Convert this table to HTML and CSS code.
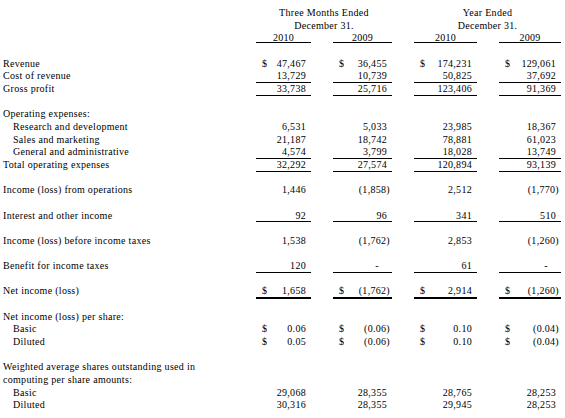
FILE: index.html
```html
<!DOCTYPE html>
<html>
<head>
<meta charset="utf-8">
<link rel="stylesheet" href="styles.css">
</head>
<body>
<div class="sheet">
  <div class="row"><div class="lbl"></div><div class="hd span2">Three Months Ended</div><div class="hd span2">Year Ended</div></div>
  <div class="row"><div class="lbl"></div><div class="hd span2">December 31.</div><div class="hd span2">December 31.</div></div>
  <div class="row"><div class="lbl"></div><div class="hd yr">2010</div><div class="hd yr">2009</div><div class="hd yr">2010</div><div class="hd yr">2009</div></div>
  <div class="row"></div>

  <div class="row"><div class="lbl">Revenue</div>
    <div class="v"><span class="cur">$</span><span>47,467</span></div>
    <div class="v"><span class="cur">$</span><span>36,455</span></div>
    <div class="v"><span class="cur">$</span><span>174,231</span></div>
    <div class="v"><span class="cur">$</span><span>129,061</span></div></div>
  <div class="row"><div class="lbl">Cost of revenue</div>
    <div class="v ul"><span>13,729</span></div>
    <div class="v ul"><span>10,739</span></div>
    <div class="v ul"><span>50,825</span></div>
    <div class="v ul"><span>37,692</span></div></div>
  <div class="row"><div class="lbl">Gross profit</div>
    <div class="v ul"><span>33,738</span></div>
    <div class="v ul"><span>25,716</span></div>
    <div class="v ul"><span>123,406</span></div>
    <div class="v ul"><span>91,369</span></div></div>
  <div class="row"></div>

  <div class="row"><div class="lbl">Operating expenses:</div></div>
  <div class="row"><div class="lbl ind">Research and development</div>
    <div class="v"><span>6,531</span></div>
    <div class="v"><span>5,033</span></div>
    <div class="v"><span>23,985</span></div>
    <div class="v"><span>18,367</span></div></div>
  <div class="row"><div class="lbl ind">Sales and marketing</div>
    <div class="v"><span>21,187</span></div>
    <div class="v"><span>18,742</span></div>
    <div class="v"><span>78,881</span></div>
    <div class="v"><span>61,023</span></div></div>
  <div class="row"><div class="lbl ind">General and administrative</div>
    <div class="v ul"><span>4,574</span></div>
    <div class="v ul"><span>3,799</span></div>
    <div class="v ul"><span>18,028</span></div>
    <div class="v ul"><span>13,749</span></div></div>
  <div class="row"><div class="lbl">Total operating expenses</div>
    <div class="v ul"><span>32,292</span></div>
    <div class="v ul"><span>27,574</span></div>
    <div class="v ul"><span>120,894</span></div>
    <div class="v ul"><span>93,139</span></div></div>
  <div class="row"></div>

  <div class="row"><div class="lbl">Income (loss) from operations</div>
    <div class="v"><span>1,446</span></div>
    <div class="v"><span class="neg">(1,858)</span></div>
    <div class="v"><span>2,512</span></div>
    <div class="v"><span class="neg">(1,770)</span></div></div>
  <div class="row"></div>

  <div class="row"><div class="lbl">Interest and other income</div>
    <div class="v ul"><span>92</span></div>
    <div class="v ul"><span>96</span></div>
    <div class="v ul"><span>341</span></div>
    <div class="v ul"><span>510</span></div></div>
  <div class="row"></div>

  <div class="row"><div class="lbl">Income (loss) before income taxes</div>
    <div class="v"><span>1,538</span></div>
    <div class="v"><span class="neg">(1,762)</span></div>
    <div class="v"><span>2,853</span></div>
    <div class="v"><span class="neg">(1,260)</span></div></div>
  <div class="row"></div>

  <div class="row"><div class="lbl">Benefit for income taxes</div>
    <div class="v ul"><span>120</span></div>
    <div class="v ul"><span class="dash">-</span></div>
    <div class="v ul"><span>61</span></div>
    <div class="v ul"><span class="dash">-</span></div></div>
  <div class="row"></div>

  <div class="row"><div class="lbl">Net income (loss)</div>
    <div class="v dul"><span class="cur">$</span><span>1,658</span></div>
    <div class="v dul"><span class="cur">$</span><span class="neg">(1,762)</span></div>
    <div class="v dul"><span class="cur">$</span><span>2,914</span></div>
    <div class="v dul"><span class="cur">$</span><span class="neg">(1,260)</span></div></div>
  <div class="row"></div>

  <div class="row"><div class="lbl">Net income (loss) per share:</div></div>
  <div class="row"><div class="lbl ind">Basic</div>
    <div class="v"><span class="cur">$</span><span>0.06</span></div>
    <div class="v"><span class="cur">$</span><span class="neg">(0.06)</span></div>
    <div class="v"><span class="cur">$</span><span>0.10</span></div>
    <div class="v"><span class="cur">$</span><span class="neg">(0.04)</span></div></div>
  <div class="row"><div class="lbl ind">Diluted</div>
    <div class="v"><span class="cur">$</span><span>0.05</span></div>
    <div class="v"><span class="cur">$</span><span class="neg">(0.06)</span></div>
    <div class="v"><span class="cur">$</span><span>0.10</span></div>
    <div class="v"><span class="cur">$</span><span class="neg">(0.04)</span></div></div>
  <div class="row"></div>

  <div class="row"><div class="lbl">Weighted average shares outstanding used in</div></div>
  <div class="row"><div class="lbl">computing per share amounts:</div></div>
  <div class="row"><div class="lbl ind">Basic</div>
    <div class="v"><span>29,068</span></div>
    <div class="v"><span>28,355</span></div>
    <div class="v"><span>28,765</span></div>
    <div class="v"><span>28,253</span></div></div>
  <div class="row"><div class="lbl ind">Diluted</div>
    <div class="v"><span>30,316</span></div>
    <div class="v"><span>28,355</span></div>
    <div class="v"><span>29,945</span></div>
    <div class="v"><span>28,253</span></div></div>
</div>
</body>
</html>
```
FILE: styles.css
```css
html, body {
  margin: 0;
  padding: 0;
  background: #fff;
}
body {
  font-family: "Liberation Serif", "Times New Roman", serif;
  font-size: 10px;
  letter-spacing: 0.3px;
  color: #000;
}
.sheet {
  padding: 7px 0 0 3px;
}
.row {
  display: grid;
  grid-template-columns: 231px 55px 59px 63px 62px;
  column-gap: 22px;
  height: 12.67px;
  line-height: 12.67px;
  white-space: nowrap;
}
.lbl {
  grid-column: 1;
}
.lbl.ind {
  padding-left: 10px;
}
.hd {
  text-align: center;
}
.span2 {
  grid-column: span 2;
}
.yr {
  background: linear-gradient(#000, #000) left 0 bottom 2px / 100% 1px no-repeat;
}
.ul {
  box-shadow: inset 0 -1px 0 #000;
}
.dul {
  box-shadow: inset 0 -1px 0 #000, 0 1px 0 #000;
}
.v {
  display: flex;
  justify-content: flex-end;
  padding: 0 5px 0 6px;
}
.v .cur {
  margin-right: auto;
}
.neg {
  margin-right: -3px;
}
.dash {
  margin-right: 8px;
}
```
